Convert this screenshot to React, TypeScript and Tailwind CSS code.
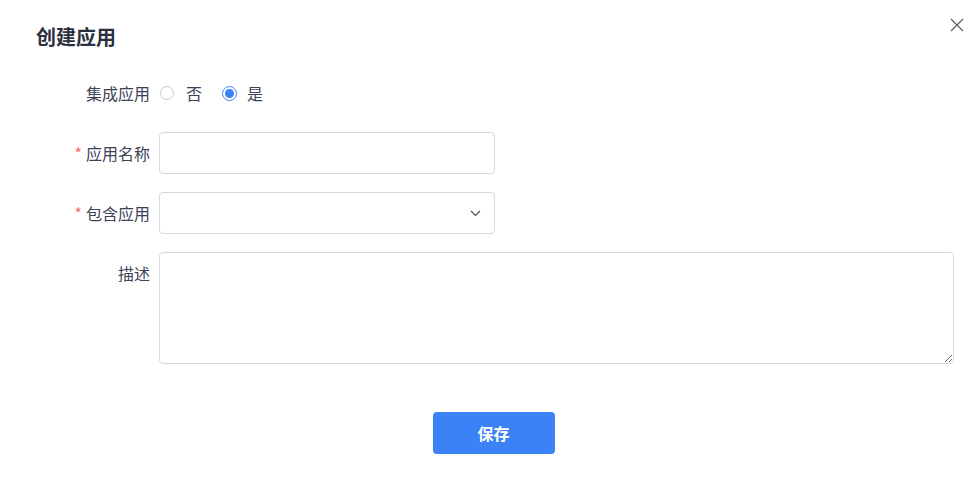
import React, { useState } from 'react'

const font = { fontFamily: '"Noto Sans CJK SC", "Noto Sans", sans-serif' }

export default function App() {
    const [integrated, setIntegrated] = useState(true)

    return (
        <div className="relative w-[980px] h-[486px] bg-white text-[#3c4257]" style={font}>
            {/* close */}
            <button className="absolute right-[16px] top-[18px] text-[#5c6170]">
                <svg width="14" height="14" viewBox="0 0 14 14" fill="none" stroke="currentColor" strokeWidth="1.3">
                    <path d="M1 1 L13 13 M13 1 L1 13" />
                </svg>
            </button>

            <div className="pt-[22px] pl-[36px]">
                <h1 className="text-[20px] leading-[30px] font-bold text-[#2b3040]">创建应用</h1>
            </div>

            <div className="mt-[26px] flex flex-col">
                {/* 集成应用 */}
                <div className="flex items-center h-[30px]">
                    <label className="w-[150px] text-right text-[16px]">集成应用</label>
                    <div className="flex items-center ml-[10px] text-[16px]">
                        <label className="flex items-center cursor-pointer" onClick={() => setIntegrated(false)}>
                            <span className={`w-[14px] h-[14px] rounded-full border ${!integrated ? 'border-[#3b82f6]' : 'border-[#c9ccd6]'} flex items-center justify-center`}>
                                {!integrated && <span className="w-[8px] h-[8px] rounded-full bg-[#3b82f6]" />}
                            </span>
                            <span className="ml-[12px]">否</span>
                        </label>
                        <label className="flex items-center cursor-pointer ml-[20px]" onClick={() => setIntegrated(true)}>
                            <span className={`w-[15px] h-[15px] rounded-full border ${integrated ? 'border-[#3b82f6]' : 'border-[#c9ccd6]'} flex items-center justify-center`}>
                                {integrated && <span className="w-[9px] h-[9px] rounded-full bg-[#3b82f6]" />}
                            </span>
                            <span className="ml-[10px]">是</span>
                        </label>
                    </div>
                </div>

                {/* 应用名称 */}
                <div className="flex items-center mt-[24px]">
                    <label className="w-[150px] text-right text-[16px]">
                        <span className="text-[#f56c6c] mr-[4px]">*</span>应用名称
                    </label>
                    <input className="ml-[9px] w-[336px] h-[42px] rounded-[4px] border border-[#d5d8e3] px-3 outline-none" />
                </div>

                {/* 包含应用 */}
                <div className="flex items-center mt-[18px]">
                    <label className="w-[150px] text-right text-[16px]">
                        <span className="text-[#f56c6c] mr-[4px]">*</span>包含应用
                    </label>
                    <div className="ml-[9px] w-[336px] h-[42px] rounded-[4px] border border-[#d5d8e3] flex items-center justify-end pr-[13px]">
                        <svg width="11" height="7" viewBox="0 0 11 7" fill="none" stroke="#4b5060" strokeWidth="1.2">
                            <path d="M1 1 L5.5 5.5 L10 1" />
                        </svg>
                    </div>
                </div>

                {/* 描述 */}
                <div className="flex items-start mt-[18px]">
                    <label className="w-[150px] text-right text-[16px] pt-[9px]">描述</label>
                    <textarea className="ml-[9px] w-[795px] h-[112px] rounded-[4px] border border-[#d5d8e3] px-3 py-2 outline-none" />
                </div>

                <div className="flex justify-center mt-[48px] pl-[7px]">
                    <button className="w-[122px] h-[42px] rounded-[4px] bg-[#3b82f6] text-white text-[16px] font-bold">保存</button>
                </div>
            </div>
        </div>
    )
}
